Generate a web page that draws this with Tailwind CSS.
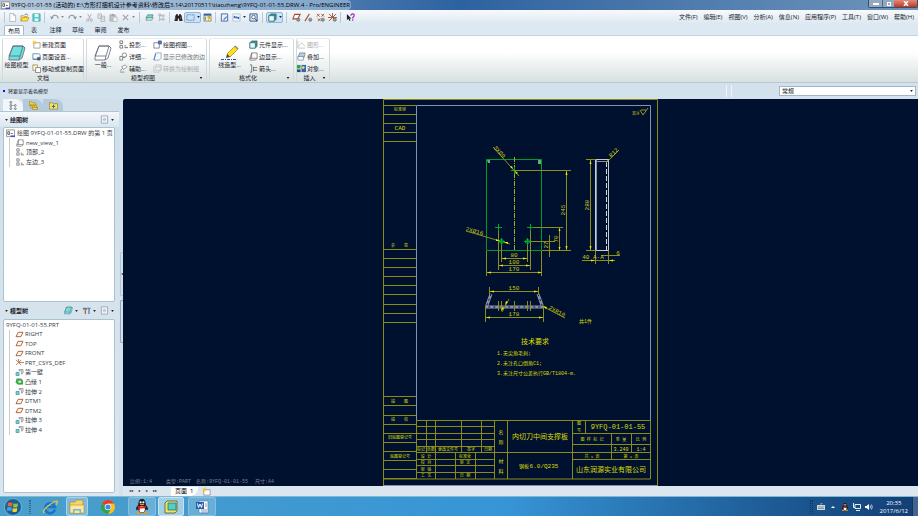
<!DOCTYPE html>
<html lang="zh-CN">

<head>
    <meta charset="UTF-8">
    <meta name="viewport" content="width=device-width, initial-scale=1.0">
    <title>9YFQ-01-01-55 - Pro/ENGINEER</title>
    <script src="https://cdn.jsdelivr.net/npm/@tailwindcss/browser@4"></script>
</head>

<body class="flex h-screen flex-col overflow-hidden bg-[#d3e1ec] font-['Open_Sans','Noto_Sans_CJK_SC',sans-serif] text-[6px] leading-[8px] text-[#16202a]">

    <!-- shared icons -->
    <svg class="hidden">
        <symbol id="caret" viewBox="0 0 4 3"><path d="M0 0h4L2 3z" fill="#222" /></symbol>
        <symbol id="sheet" viewBox="0 0 10 10"><path d="M2 .5h4l2.500 2.500v6.500h-6.500z" fill="#fff" stroke="#a0a6ac" stroke-width=".8" /><path d="M6 .5v2.500h2.500" fill="none" stroke="#a0a6ac" stroke-width=".7" /></symbol>
        <symbol id="open" viewBox="0 0 10 10"><path d="M1 9V3h3l1 1h3v2" fill="#f8e27a" stroke="#a98a20" stroke-width=".7" /><path d="M1 9l2-4h7L8 9z" fill="#ffe23c" stroke="#a98a20" stroke-width=".7" /><path d="M5 2q2-2 4 .5" fill="none" stroke="#444" stroke-width=".7" /></symbol>
        <symbol id="save" viewBox="0 0 10 10"><rect x="1" y="1" width="8" height="8" fill="#58cfd0" stroke="#259a9c" stroke-width=".7" /><path d="M3 1h4v3.500H3zM3 6h4v3H3z" fill="#eefafa" /></symbol>
        <symbol id="undo" viewBox="0 0 10 10"><path d="M2 6q1-4 4-3.500t3 3.500" fill="none" stroke="#8b97a1" stroke-width="1.200" /><path d="M0 4l4 .5-2 3z" fill="#8b97a1" /></symbol>
        <symbol id="redo" viewBox="0 0 10 10"><path d="M8 6Q7 2 4 2.500T1 6" fill="none" stroke="#8b97a1" stroke-width="1.200" /><path d="M10 4l-4 .5 2 3z" fill="#8b97a1" /></symbol>
        <symbol id="cut" viewBox="0 0 10 10"><path d="M3 1l3 6M7 1L4 7" stroke="#a6adb3" fill="none" /><circle cx="3" cy="8" r="1.300" fill="none" stroke="#a6adb3" /><circle cx="7" cy="8" r="1.300" fill="none" stroke="#a6adb3" /></symbol>
        <symbol id="copy" viewBox="0 0 10 10"><path d="M1 1h4v5H1zM4.500 3.500h4v6h-4z" fill="#e8eaec" stroke="#a6adb3" stroke-width=".8" /><path d="M5.500 5.500h2M5.500 7.500h2M2 3h2" stroke="#a6adb3" stroke-width=".6" /></symbol>
        <symbol id="movepage" viewBox="0 0 10 10"><path d="M1 1h5v6H1z" fill="#fff" stroke="#8a7c50" stroke-width=".8" /><path d="M4 4h5.500v5.500H4z" fill="#fff" stroke="#666" stroke-width=".8" /><path d="M1 1h2.500v1.500H1z" fill="#f2c020" /></symbol>
        <symbol id="paste" viewBox="0 0 10 10"><path d="M1 2h6v7H1z" fill="#bfc4c8" stroke="#a0a6ac" stroke-width=".8" /><path d="M3 1h2v2H3z" fill="#999" /><path d="M4.500 4.500h4.500v5H4.500z" fill="#f2f3f4" stroke="#a6adb3" stroke-width=".7" /></symbol>
        <symbol id="del" viewBox="0 0 10 10"><path d="M2 2l6 6M8 2L2 8" stroke="#9aa2a9" stroke-width="1.200" /></symbol>
        <symbol id="layers" viewBox="0 0 10 10"><path d="M1 8l2-3h6L7.500 8z" fill="#e8f4f4" stroke="#55757a" stroke-width=".7" /><path d="M1 5.500L3 2h6L7.500 5.500z" fill="#7ad4cc" stroke="#3d7a78" stroke-width=".7" /></symbol>
        <symbol id="mtree" viewBox="0 0 10 10"><path d="M3 1v8M3 3h3M3 7h3" fill="none" stroke="#9aa2a9" stroke-width=".8" /><path d="M6 2h2v2H6zM6 6h2v2H6zM2 1h2v2H2z" fill="#dde1e4" stroke="#9aa2a9" stroke-width=".6" /></symbol>
        <symbol id="find" viewBox="0 0 10 10"><path d="M1.500 3l1.500-2h1l.5 2h1L6 1h1l1.500 2L9.500 9H6L5.500 6h-1L4 9H.5z" fill="#26221e" /><path d="M2 4.500v3M7.500 4v3" stroke="#b89060" stroke-width=".6" /></symbol>
        <symbol id="pick" viewBox="0 0 10 10"><rect x="1" y="2" width="8" height="6" fill="none" stroke="#2c5d9a" stroke-dasharray="1 1" /></symbol>
        <symbol id="query" viewBox="0 0 10 10"><path d="M1 1h8v8H1z" fill="#f4f0c0" stroke="#6b7680" stroke-width=".8" /><path d="M1 1h8v2H1z" fill="#3465a8" /><path d="M2.500 4v4" stroke="#3465a8" /><path d="M5 5q1.500-2 2.500 0 0 1-1.200 1.500v.6M6.300 8v.8" fill="none" stroke="#c8a000" stroke-width="1.200" /></symbol>
        <symbol id="repaint" viewBox="0 0 10 10"><path d="M1.500 1h7v8h-7z" fill="#eaf2fb" stroke="#2d5496" stroke-width=".9" /><path d="M3.500 7L7 3.500l1 1L4.500 8z" fill="#4a87d0" /></symbol>
        <symbol id="refit" viewBox="0 0 10 10"><path d="M1 1h8v8H1z" fill="#f2f7fc" stroke="#90a7c4" stroke-width=".6" /><path d="M2 6V3l2 1.500zM8 4v3L6 5.500z" fill="#1746a8" /><path d="M3 4.500h3M4 5.500h3" stroke="#1746a8" /></symbol>
        <symbol id="zoomin" viewBox="0 0 10 10"><path d="M1 1h8v8H1z" fill="#d9e8f7" stroke="#2d5496" /><circle cx="5" cy="4.500" r="2" fill="#fff" stroke="#444" stroke-width=".8" /><path d="M6.500 6L9 9" stroke="#333" /></symbol>
        <symbol id="cube" viewBox="0 0 10 10"><path d="M1 3l2-2h6v6L7 9H1z" fill="#3c8f94" stroke="#256569" stroke-width=".7" /><path d="M1 3h6v6H1z" fill="#e9fbfb" stroke="#256569" stroke-width=".7" /></symbol>
        <symbol id="plane" viewBox="0 0 10 8"><path d="M3.500 1.500H9L6.500 6.500H1z" fill="#fff8f0" stroke="#a0522d" stroke-width="1" /></symbol>
        <symbol id="dplane" viewBox="0 0 10 10"><path d="M3 1.500h6L6.500 6.500H1z" fill="#fff" stroke="#a0522d" stroke-width="1.200" /><circle cx="7" cy="7.500" r="1.800" fill="#999" stroke="#555" stroke-width=".6" /></symbol>
        <symbol id="daxis" viewBox="0 0 10 10"><path d="M1 9L6 1" stroke="#a0522d" stroke-width="1.200" /><circle cx="7" cy="7.500" r="1.800" fill="#999" stroke="#555" stroke-width=".6" /></symbol>
        <symbol id="dpoint" viewBox="0 0 10 10"><path d="M1 1l3 3M4 1L1 4M6 1l3 3M9 1L6 4M2 6l3 3M5 6L2 9" stroke="#a0522d" /><circle cx="7.500" cy="7.500" r="1.800" fill="#999" stroke="#555" stroke-width=".6" /></symbol>
        <symbol id="dcsys" viewBox="0 0 10 10"><path d="M5 5V0M0 5h10M5 5L1 9M1 1l7 7M9 1L5 5" stroke="#a0522d" /><circle cx="7.500" cy="7.500" r="1.800" fill="#999" stroke="#555" stroke-width=".6" /></symbol>
        <symbol id="csys" viewBox="0 0 10 8"><path d="M4 4V0M4 4h6M4 4L1 7M4 4L1 1M4 4l3 3M4 4l3-3" stroke="#a0623d" stroke-width=".9" /></symbol>
        <symbol id="whats" viewBox="0 0 10 10"><path d="M1 1v7l1.500-1.500L4 9l1-.6L4 6h2z" fill="#222" /><path d="M5.500 3q0-2 2-2t1.500 2q0 1-1.500 2v1M7.500 7v1.500" fill="none" stroke="#a020c0" stroke-width="1.300" /></symbol>
        <symbol id="newpage" viewBox="0 0 10 10"><path d="M2 3h7v6H2z" fill="#fff" stroke="#777" stroke-width=".7" /><path d="M1 1.500h3.500v3H1z" fill="#f2c020" /><path d="M2.500 0v5M0 2.500h5" stroke="#f7d850" stroke-width=".6" /></symbol>
        <symbol id="pageset" viewBox="0 0 10 10"><path d="M1 2h7l1 1v5H1z" fill="#fff" stroke="#456fa4" stroke-width=".8" /><path d="M1 8h8M6 6h3v3H6z" fill="#3a66b4" stroke="#345" stroke-width=".6" /></symbol>
        <symbol id="views" viewBox="0 0 10 10"><path d="M1 1h3v3H1zM1 6h3v3H1z" fill="#fff" stroke="#555" stroke-width=".8" /><path d="M6 8.500h4M6 6.500h2" stroke="#555" stroke-width=".9" /></symbol>
        <symbol id="detail" viewBox="0 0 10 10"><circle cx="6" cy="3.500" r="2.500" fill="#fff" stroke="#666" stroke-width=".8" /><path d="M1 5h3v4H1zM4 7l3-2" fill="#fff" stroke="#666" stroke-width=".8" /></symbol>
        <symbol id="aux" viewBox="0 0 10 10"><path d="M3 3l4-2 2 2-4 3zM1 8l3-3M1 9h5" fill="#fff" stroke="#777" stroke-width=".8" /></symbol>
        <symbol id="dview" viewBox="0 0 10 10"><path d="M1 3h6v6H1z" fill="#fff" stroke="#667" stroke-width=".8" /><path d="M6 1h3.500v3.500H6z" fill="#4a78c8" stroke="#2c4f94" stroke-width=".6" /></symbol>
        <symbol id="modedge" viewBox="0 0 10 10"><path d="M3 1h6v6L7 9H1z" fill="#f4f8ff" stroke="#8894a4" stroke-width=".8" /><path d="M1 9L3 2" stroke="#4878d0" /></symbol>
        <symbol id="gray" viewBox="0 0 10 10"><path d="M1 3l2-2h6v6L7 9H1zM3 3h5v4H3z" fill="#f1f2f2" stroke="#b4babd" stroke-width=".8" /></symbol>
        <symbol id="wire" viewBox="0 0 10 10"><path d="M3 1h6v6L7 9H1V7zM3 1v6H1M3 7h6" fill="#fff" stroke="#666" stroke-width=".8" /></symbol>
        <symbol id="arrows" viewBox="0 0 10 10"><path d="M1 1h2v8H1M5 4h4M5 7h4M5 3v5" fill="none" stroke="#555" stroke-width=".8" /></symbol>
        <symbol id="graph" viewBox="0 0 10 10"><path d="M1 1v8h8M1 8l4-5 4 4" fill="none" stroke="#b4babd" stroke-width=".8" /></symbol>
        <symbol id="overlay" viewBox="0 0 10 10"><path d="M3 1h6L8 6H1z" fill="#a8d0ea" stroke="#66737e" stroke-width=".7" /><path d="M1 5h6v4H1z" fill="#fff" stroke="#66737e" stroke-width=".7" /></symbol>
        <symbol id="object" viewBox="0 0 10 10"><path d="M0 1h4v4H0z" fill="#38a048" /><path d="M5 1h5v8H5z" fill="#2e68b8" /><path d="M0 6h4v3H0z" fill="#28486c" /><circle cx="7" cy="4" r="1.500" fill="#ffd75c" /></symbol>
        <symbol id="block" viewBox="0 0 18 16"><path d="M5 1h10l2 2-3 10-3 2H1V12z" fill="currentColor" stroke="#667" stroke-width=".8" /><path d="M5 1h10l-3 10H1zM12 11l-1 4M15 1l2 2" fill="none" stroke="#667" stroke-width=".8" /></symbol>
        <symbol id="pencil" viewBox="0 0 18 16"><path d="M6 9L14 1l3 3-8 8z" fill="#ffdf20" stroke="#a07c10" stroke-width=".7" /><path d="M6 9l3 3-4 1z" fill="#5b4636" /><path d="M14 1l3 3" stroke="#888" stroke-width="1.500" /><path d="M0 14.500h16" stroke="#1c4fd0" stroke-width="1.200" stroke-dasharray="3 1 1 1" /></symbol>
        <symbol id="list" viewBox="0 0 10 10"><path d="M1.500 1h7v8h-7z" fill="#fff" stroke="#7d90a8" stroke-width=".8" /><path d="M3 3.500h4M3 5h4M3 6.500h4" stroke="#8aa0b8" stroke-width=".7" /></symbol>
        <symbol id="tree" viewBox="0 0 10 10"><path d="M2 2v6M2 5h4" stroke="#777" stroke-width=".6" /><circle cx="2" cy="1.500" r="1" fill="#fff" stroke="#444" stroke-width=".7" /><circle cx="2" cy="5" r="1" fill="#fff" stroke="#444" stroke-width=".7" /><circle cx="2" cy="8.500" r="1" fill="#fff" stroke="#444" stroke-width=".7" /><circle cx="7" cy="5" r="1" fill="#fff" stroke="#444" stroke-width=".7" /><circle cx="7" cy="8.500" r="1" fill="#fff" stroke="#444" stroke-width=".7" /></symbol>
        <symbol id="folders" viewBox="0 0 10 10"><path d="M.5 1h3l1 1H7v3H.5zM2 3.500h3l1 1h2.500v3H2zM4 6h2l1 1h2.500v2.500H4z" fill="#ffdf4a" stroke="#8a7420" stroke-width=".6" /></symbol>
        <symbol id="fav" viewBox="0 0 10 10"><path d="M.5 2h3l1 1h5v6h-9z" fill="#ffe45c" stroke="#8a7420" stroke-width=".7" /><path d="M5 4v4M3 6h4" stroke="#3058a8" /></symbol>
        <symbol id="tools" viewBox="0 0 10 10"><path d="M1 2h5v2H1z" fill="#6a7480" /><path d="M3 4h1.500v5H3z" fill="#b06a30" /><path d="M7 4l-1-2 1-1 .5 1.500L9 2l.5-1V3L8.500 4v5H7z" fill="#5688b8" /></symbol>
        <symbol id="drw" viewBox="0 0 10 10"><path d="M.5 1h9v7.500h-9z" fill="#fff" stroke="#777" stroke-width=".8" /><path d="M2 3h2v3H2zM5.500 5h2" fill="none" stroke="#333" stroke-width=".8" /><path d="M5 8h5" stroke="#2436d0" stroke-width="1.300" /></symbol>
        <symbol id="extrude" viewBox="0 0 10 8"><path d="M4.500.5H9v4L7.500 6V2h-3z" fill="#fff" stroke="#667" stroke-width=".7" /><path d="M1 4h3.500v3.500H1z" fill="#6cd8e0" stroke="#347c88" stroke-width=".7" /></symbol>
        <symbol id="protr" viewBox="0 0 10 8"><path d="M2 1h5l1.500 2v4H3L1 5z" fill="#3eb84c" stroke="#23702c" stroke-width=".7" /><path d="M4 3h2.500v2.500H4z" fill="#e7f8e8" /></symbol>
        <symbol id="qq" viewBox="0 0 14 16"><ellipse cx="4" cy="14.500" rx="3" ry="1.300" fill="#f39a12" /><ellipse cx="10" cy="14.500" rx="3" ry="1.300" fill="#f39a12" /><path d="M3 6q0-6 4-6t4 6q3 3 2 6l-2-1q-1 4-4 4t-4-4l-2 1Q0 9 3 6z" fill="#16181c" /><ellipse cx="7" cy="11" rx="3" ry="3.500" fill="#fff" /><path d="M2.500 7q4.500 2 9 0v2q-4.500 2-9 0z" fill="#e0201c" /><path d="M3 9h2v3H3z" fill="#e0201c" /><circle cx="5.500" cy="3.500" r="1.200" fill="#fff" /><circle cx="8.500" cy="3.500" r="1.200" fill="#fff" /><ellipse cx="7" cy="5.800" rx="2.500" ry=".8" fill="#f39a12" /></symbol>
    </svg>

    <!-- title bar -->
    <header class="flex h-[10px] shrink-0 items-start justify-between bg-linear-to-r from-[#9db9d4] via-[#2d62a0] to-[#6f94ba]">
        <div class="flex h-[10px] items-center gap-px rounded-r bg-linear-to-r from-[#b3c7db] to-[#7fa5cc] px-px text-black">
            <svg class="size-[9px]"><use href="#drw" /></svg>
            <h1 class="whitespace-nowrap">9YFQ-01-01-55 (活动的) E:\方形打捆机设计参考资料\修改后3.14\20170511\tiaozheng\9YFQ-01-01-55.DRW.4 - Pro/ENGINEER</h1>
        </div>
        <div class="flex h-2 overflow-hidden rounded-b-xs border border-t-0 border-[#33526f]">
            <button aria-label="最小化" class="flex w-[13px] items-center justify-center bg-[#93a9c0]"><span class="h-[2px] w-1.5 bg-white"></span></button>
            <button aria-label="还原" class="flex w-3 items-center justify-center border-l border-[#4d6985] bg-[#93a9c0]"><span class="size-1 border border-white"></span></button>
            <button aria-label="关闭" class="flex w-[23px] items-center justify-center bg-linear-to-b from-[#e08a78] to-[#c4321c]"><svg class="h-[5px] w-1.5" viewBox="0 0 6 5"><path d="M1 0l4 5M5 0L1 5" stroke="#fff" stroke-width="1.500" /></svg></button>
        </div>
    </header>

    <!-- quick access bar and menus -->
    <div class="flex h-[13px] shrink-0 items-center justify-between bg-linear-to-b from-[#f7fafd] to-[#e0e9f1] pt-px">
        <div class="flex items-center">
            <span class="mr-[1px] ml-[4px] h-[11px] w-px bg-[#b9c9d7]"></span>
            <button aria-label="新建" class="w-3"><svg class="mx-auto size-[9px]"><use href="#sheet" /></svg></button>
            <button aria-label="打开" class="w-3"><svg class="mx-auto size-[9px]"><use href="#open" /></svg></button>
            <button aria-label="保存" class="w-3"><svg class="mx-auto size-[9px]"><use href="#save" /></svg></button>
            <span class="mr-[3px] ml-[2px] h-[11px] w-px bg-[#b9c9d7]"></span>
            <button aria-label="撤消" class="flex w-[18px] items-center justify-center gap-[2px]"><svg class="size-[9px]"><use href="#undo" /></svg><svg class="h-[2px] w-[3px] opacity-50"><use href="#caret" /></svg></button>
            <button aria-label="重做" class="flex w-[18px] items-center justify-center gap-[2px]"><svg class="size-[9px]"><use href="#redo" /></svg><svg class="h-[2px] w-[3px] opacity-50"><use href="#caret" /></svg></button>
            <button aria-label="剪切" class="w-[11px]"><svg class="mx-auto size-[9px]"><use href="#cut" /></svg></button>
            <button aria-label="复制" class="w-3"><svg class="mx-auto size-[9px]"><use href="#copy" /></svg></button>
            <button aria-label="粘贴" class="w-3"><svg class="mx-auto size-[9px]"><use href="#paste" /></svg></button>
            <button aria-label="删除" class="flex w-[17px] items-center justify-center gap-[2px]"><svg class="size-[9px]"><use href="#del" /></svg><svg class="h-[2px] w-[3px] opacity-50"><use href="#caret" /></svg></button>
            <span class="mx-[3px] h-[11px] w-px bg-[#b9c9d7]"></span>
            <button aria-label="再生" class="w-3"><svg class="mx-auto size-[9px]"><use href="#layers" /></svg></button>
            <button aria-label="模型树" class="w-3"><svg class="mx-auto size-[9px]"><use href="#mtree" /></svg></button>
            <span class="mx-[2px] h-[11px] w-px bg-[#b9c9d7]"></span>
            <button aria-label="查找" class="w-3"><svg class="mx-auto size-[9px]"><use href="#find" /></svg></button>
            <button aria-label="选取" class="flex h-[11px] w-[17px] items-center justify-center gap-[2px] rounded-xs border border-[#8db8dc] bg-[#cbe3f6]"><svg class="size-[9px]"><use href="#pick" /></svg><svg class="h-[2px] w-[3px]"><use href="#caret" /></svg></button>
            <button aria-label="查询" class="w-3"><svg class="mx-auto size-[9px]"><use href="#query" /></svg></button>
            <span class="mx-[2px] h-[11px] w-px bg-[#b9c9d7]"></span>
            <button aria-label="重画" class="w-3"><svg class="mx-auto size-[9px]"><use href="#repaint" /></svg></button>
            <button aria-label="重新调整" class="flex w-[17px] items-center justify-center gap-[2px]"><svg class="size-[9px]"><use href="#refit" /></svg><svg class="h-[2px] w-[3px]"><use href="#caret" /></svg></button>
            <button aria-label="缩放" class="w-3"><svg class="mx-auto size-[9px]"><use href="#zoomin" /></svg></button>
            <span class="mx-[3px] h-[11px] w-px bg-[#b9c9d7]"></span>
            <button aria-label="显示样式" class="flex h-[11px] w-[17px] items-center justify-center gap-[2px] rounded-xs border border-[#8db8dc] bg-[#cbe3f6]"><svg class="size-[9px]"><use href="#cube" /></svg><svg class="h-[2px] w-[3px]"><use href="#caret" /></svg></button>
            <span class="mx-[3px] h-[11px] w-px bg-[#b9c9d7]"></span>
            <button aria-label="基准平面" class="w-3"><svg class="mx-auto size-[9px]"><use href="#dplane" /></svg></button>
            <button aria-label="基准轴" class="w-3"><svg class="mx-auto size-[9px]"><use href="#daxis" /></svg></button>
            <button aria-label="基准点" class="w-3"><svg class="mx-auto size-[9px]"><use href="#dpoint" /></svg></button>
            <button aria-label="坐标系" class="w-3"><svg class="mx-auto size-[9px]"><use href="#dcsys" /></svg></button>
            <span class="mr-[3px] ml-[2px] h-[11px] w-px bg-[#b9c9d7]"></span>
            <button aria-label="上下文帮助" class="w-3"><svg class="mx-auto size-[9px]"><use href="#whats" /></svg></button>
        </div>
        <nav class="flex gap-[6px] pr-[4px]">
            <button>文件(F)</button>
            <button>编辑(E)</button>
            <button>视图(V)</button>
            <button>分析(A)</button>
            <button>信息(N)</button>
            <button>应用程序(P)</button>
            <button>工具(T)</button>
            <button>窗口(W)</button>
            <button>帮助(H)</button>
        </nav>
    </div>

    <!-- ribbon tabs -->
    <div class="flex h-[13px] shrink-0 items-end border-b border-[#c3d2df] bg-[#dce8f2] pl-[4px]">
        <button class="h-[10px] w-5 rounded-t-xs border border-b-0 border-[#a5b9ca] bg-white">布局</button>
        <button class="h-[10px] w-5">表</button>
        <button class="h-[10px] w-[23px]">注释</button>
        <button class="h-[10px] w-[22px]">草绘</button>
        <button class="h-[10px] w-[23px]">审阅</button>
        <button class="h-[10px] w-[23px]">发布</button>
    </div>

    <!-- ribbon -->
    <div class="flex h-[47px] shrink-0 gap-[2px] border-b border-[#b7c7d3] bg-linear-to-b from-white from-35% to-[#d8e0e0] pt-[2px] pl-[2px] whitespace-nowrap">
        <section class="flex w-[82px] flex-col rounded-xs border border-b-0 border-t-[#e8eef0] border-[#d0dade]">
            <div class="flex flex-1 items-center">
                <button class="w-[27px] shrink-0"><svg class="mx-auto h-4 w-[18px] text-[#6fe0e0]"><use href="#block" /></svg>绘图模型</button>
                <div class="flex flex-1 flex-col gap-[3px] pl-[2px]">
                    <button class="flex h-[9px] items-center gap-[1px]"><svg class="size-[9px]"><use href="#newpage" /></svg>新建页面</button>
                    <button class="flex h-[9px] items-center gap-[1px]"><svg class="size-[9px]"><use href="#pageset" /></svg>页面设置...</button>
                    <button class="flex h-[9px] items-center gap-[1px]"><svg class="size-[9px]"><use href="#movepage" /></svg>移动或复制页面</button>
                </div>
            </div>
            <h2 class="text-center">文档</h2>
        </section>
        <section class="flex w-[121px] flex-col rounded-xs border border-b-0 border-t-[#e8eef0] border-[#d0dade]">
            <div class="flex flex-1 items-center">
                <button class="w-[32px] shrink-0"><svg class="mx-auto h-4 w-[18px] text-white"><use href="#block" /></svg>一般...</button>
                <div class="flex w-[34px] flex-col gap-[3px]">
                    <button class="flex h-[9px] items-center gap-[1px]"><svg class="size-[9px]"><use href="#views" /></svg>投影...</button>
                    <button class="flex h-[9px] items-center gap-[1px]"><svg class="size-[9px]"><use href="#detail" /></svg>详细...</button>
                    <button class="flex h-[9px] items-center gap-[1px]"><svg class="size-[9px]"><use href="#aux" /></svg>辅助...</button>
                </div>
                <div class="flex flex-1 flex-col gap-[3px]">
                    <button class="flex h-[9px] items-center gap-[1px]"><svg class="size-[9px]"><use href="#dview" /></svg>绘图视图...</button>
                    <button class="flex h-[9px] items-center gap-[1px] text-[#6c757c]"><svg class="size-[9px]"><use href="#modedge" /></svg>显示已修改的边</button>
                    <button class="flex h-[9px] items-center gap-[1px] text-[#a8aeb2]"><svg class="size-[9px]"><use href="#gray" /></svg>转换为绘制组</button>
                </div>
            </div>
            <div class="flex items-center pr-[3px]"><h2 class="flex-1 text-center">模型视图</h2><svg class="h-[2px] w-[4px]"><use href="#caret" /></svg></div>
        </section>
        <section class="flex w-[85px] flex-col rounded-xs border border-b-0 border-t-[#e8eef0] border-[#d0dade]">
            <div class="flex flex-1 items-center">
                <button class="w-[39px] shrink-0"><svg class="mx-auto h-4 w-[18px]"><use href="#pencil" /></svg>线造型...</button>
                <div class="flex flex-1 flex-col gap-[3px]">
                    <button class="flex h-[9px] items-center gap-[1px]"><svg class="size-[9px]"><use href="#cube" /></svg>元件显示...</button>
                    <button class="flex h-[9px] items-center gap-[1px]"><svg class="size-[9px]"><use href="#wire" /></svg>边显示...</button>
                    <button class="flex h-[9px] items-center gap-[1px]"><svg class="size-[9px]"><use href="#arrows" /></svg>箭头...</button>
                </div>
            </div>
            <div class="flex items-center pr-[3px]"><h2 class="flex-1 text-center">格式化</h2><svg class="h-[2px] w-[4px]"><use href="#caret" /></svg></div>
        </section>
        <section class="flex w-[34px] flex-col rounded-xs border border-b-0 border-t-[#e8eef0] border-[#d0dade]">
            <div class="flex flex-1 flex-col justify-center gap-[3px]">
                <button class="flex h-[9px] items-center gap-[1px] text-[#a8aeb2]"><svg class="size-[9px]"><use href="#graph" /></svg>图形...</button>
                <button class="flex h-[9px] items-center gap-[1px]"><svg class="size-[9px]"><use href="#overlay" /></svg>叠加...</button>
                <button class="flex h-[9px] items-center gap-[1px]"><svg class="size-[9px]"><use href="#object" /></svg>对象...</button>
            </div>
            <div class="flex items-center pr-[3px]"><h2 class="flex-1 text-center">插入</h2><svg class="h-[2px] w-[4px]"><use href="#caret" /></svg></div>
        </section>
    </div>

    <!-- message line and selection filter -->
    <div class="flex h-[15px] shrink-0 items-center justify-between pr-[2px] pl-[3px]">
        <p class="flex items-center gap-[3px] text-[5px]"><span class="size-[2px] bg-[#0a14f0]"></span>将要显示着色模型</p>
        <div class="flex items-center gap-[4px]">
            <span class="h-3 w-px bg-[#eef4f8]"></span>
            <span class="mr-[43px] h-3 w-px bg-[#eef4f8]"></span>
            <div class="relative">
                <select aria-label="选取过滤器" class="block h-[10px] w-[137px] appearance-none border border-[#a3b6c6] bg-white pl-[2px] leading-[8px]">
                    <option>常规</option>
                </select>
                <svg class="pointer-events-none absolute top-[4px] right-[3px] h-[2px] w-[3px]"><use href="#caret" /></svg>
            </div>
        </div>
    </div>

    <main class="flex min-h-0 flex-1">
        <aside class="flex w-[119px] shrink-0 flex-col bg-linear-to-b from-[#d0dfea] to-[#dbe7ef] pb-[3px]">
            <div class="flex h-[14px] items-end border-b border-[#b0c4d3] pl-[3px]">
                <button aria-label="模型树" class="flex h-3 w-5 items-center justify-center rounded-tr-lg bg-[#f0f6fa]"><svg class="size-[9px]"><use href="#tree" /></svg></button>
                <button aria-label="文件夹浏览器" class="flex h-3 w-5 items-center justify-center rounded-tr-lg bg-[#b4cad9]"><svg class="size-[9px]"><use href="#folders" /></svg></button>
                <button aria-label="收藏夹" class="flex h-3 w-5 items-center justify-center rounded-tr-lg bg-[#b4cad9]"><svg class="size-[9px]"><use href="#fav" /></svg></button>
            </div>
            <div class="flex h-[15px] items-center bg-linear-to-b from-[#f3f8fb] to-[#dae6ee] pr-[5px] pl-[5px]">
                <h2 class="flex flex-1 items-center gap-[2px] font-bold"><svg class="h-[2px] w-[3px]"><use href="#caret" /></svg>绘图树</h2>
                <button aria-label="设置" class="flex items-center gap-[2px]"><svg class="size-[9px]"><use href="#list" /></svg><svg class="h-[2px] w-[3px]"><use href="#caret" /></svg></button>
            </div>
            <div class="mr-1 ml-[3px] flex-1 overflow-hidden rounded-xs border border-[#a9c2d3] bg-white whitespace-nowrap text-[#343c44]">
                <div class="flex h-[10px] items-center gap-[2px] pl-[2px]"><svg class="size-[9px] shrink-0"><use href="#drw" /></svg>绘图 9YFQ-01-01-55.DRW 的第 1 页</div>
                <ul class="ml-[5px] grid h-[29px] grid-rows-3 border-l border-[#ccc] pl-[5px]">
                    <li class="flex items-center gap-[1px]"><svg class="h-2 w-[10px]"><use href="#wire" /></svg>new_view_1</li>
                    <li class="flex items-center gap-[1px]"><svg class="h-2 w-[10px]"><use href="#views" /></svg>顶部_2</li>
                    <li class="flex items-center gap-[1px]"><svg class="h-2 w-[10px]"><use href="#views" /></svg>左边_3</li>
                </ul>
            </div>
            <div class="flex h-[17px] items-center gap-[4px] pt-px pr-[5px] pl-[5px]">
                <h2 class="flex flex-1 items-center gap-[2px] font-bold"><svg class="h-[2px] w-[3px]"><use href="#caret" /></svg>模型树</h2>
                <button aria-label="显示" class="flex items-center gap-[2px] text-[#6fe0e0]"><svg class="size-[9px]"><use href="#block" /></svg><svg class="h-[2px] w-[3px]"><use href="#caret" /></svg></button>
                <button aria-label="工具" class="flex items-center gap-[2px]"><svg class="size-[9px]"><use href="#tools" /></svg><svg class="h-[2px] w-[3px]"><use href="#caret" /></svg></button>
                <button aria-label="列表" class="flex items-center gap-[2px]"><svg class="size-[9px]"><use href="#list" /></svg><svg class="h-[2px] w-[3px]"><use href="#caret" /></svg></button>
            </div>
            <div class="mr-1 ml-[3px] flex-1 overflow-hidden rounded-xs border border-[#a9c2d3] bg-white whitespace-nowrap text-[#343c44]">
                <div class="h-[10px] pl-[2px] leading-[10px]">9YFQ-01-01-55.PRT</div>
                <ul class="ml-[5px] grid h-[105px] grid-rows-11 border-l border-[#ccc] pl-[5px]">
                    <li class="flex items-center gap-[1px]"><svg class="h-[7px] w-[9px]"><use href="#plane" /></svg>RIGHT</li>
                    <li class="flex items-center gap-[1px]"><svg class="h-[7px] w-[9px]"><use href="#plane" /></svg>TOP</li>
                    <li class="flex items-center gap-[1px]"><svg class="h-[7px] w-[9px]"><use href="#plane" /></svg>FRONT</li>
                    <li class="flex items-center gap-[1px]"><svg class="h-[7px] w-[9px]"><use href="#csys" /></svg>PRT_CSYS_DEF</li>
                    <li class="flex items-center gap-[1px]"><svg class="h-[7px] w-[9px]"><use href="#extrude" /></svg>第一壁</li>
                    <li class="flex items-center gap-[1px]"><svg class="h-[7px] w-[9px]"><use href="#protr" /></svg>凸缘 1</li>
                    <li class="flex items-center gap-[1px]"><svg class="h-[7px] w-[9px]"><use href="#extrude" /></svg>拉伸 2</li>
                    <li class="flex items-center gap-[1px]"><svg class="h-[7px] w-[9px]"><use href="#plane" /></svg>DTM1</li>
                    <li class="flex items-center gap-[1px]"><svg class="h-[7px] w-[9px]"><use href="#plane" /></svg>DTM2</li>
                    <li class="flex items-center gap-[1px]"><svg class="h-[7px] w-[9px]"><use href="#extrude" /></svg>拉伸 3</li>
                    <li class="flex items-center gap-[1px]"><svg class="h-[7px] w-[9px]"><use href="#extrude" /></svg>拉伸 4</li>
                </ul>
            </div>
        </aside>
        <div class="flex w-[4px] shrink-0 flex-col items-center pt-[154px]">
            <button aria-label="折叠导航器" class="h-[44px] w-[3px] rounded-l-xs border border-r-0 border-[#b3c6d4] text-[4px] leading-[40px]">◂</button>
            <span class="mt-[4px] h-[43px] w-[3px] rounded-l-xs border border-r-0 border-[#93a9b9]"></span>
        </div>

        <section class="flex min-w-0 flex-1 flex-col pt-px">
            <!-- drawing sheet -->
            <div class="min-h-0 flex-1 overflow-hidden rounded-tl-xs bg-[#00102f]">
                <svg class="size-full font-['Liberation_Mono','Noto_Sans_CJK_SC',monospace] text-[6px]" viewBox="123 99 795 387" preserveAspectRatio="xMinYMin meet" fill="none">
                    <!-- frame -->
                    <path d="M383.500 486V99.500h274V486M650.500 420v59H384" stroke="#8c8c14" />
                    <path d="M416.500 420V105.500h234V420" stroke="#8b90a8" />
                    <path d="M383 485.500h275" stroke="#8b90a8" />
                    <path d="M384 105.500h32M384 114.500h32M384 123.500h32M384 132.500h32M384 141.500h32M384 249.500h32M384 258.500h32M384 267.500h32M384 276.500h32M384 285.500h32M384 294.500h32M384 304.500h32M384 313.500h32M384 322.500h32M384 396.500h32M384 405.500h32M384 415.500h32M384 424.500h32M384 433.500h32M384 442.500h32M384 451.500h32M384 460.500h32M384 469.500h32M384 478.500h32" stroke="#8c8c14" />
                    <!-- title block -->
                    <path d="M416.500 420v59M416 420.500h234M416 426.500h78M416 433.500h78M416 439.500h78M416 446.500h78M416 452.500h234M416 459.500h78M416 465.500h78M416 472.500h78M572 433.500h78M572 444.500h78M572 459.500h78M426.500 420v32M435.500 420v59M461.500 420v32M481.500 420v32M455.500 452v27M475.500 452v27M494.500 420v59M507.500 420v59M572.500 420v59M585.500 420v13M611.500 433v26M631.500 433v19" stroke="#8c8c14" />

                    <!-- front view -->
                    <path d="M486.500 250.500v-91h55v91z" stroke="#009a28" />
                    <path d="M487 160h3v3h-2zM538 160h3v4h-3z" fill="#5db070" />
                    <path d="M514.500 157v94" stroke="#a8a818" stroke-dasharray="5 1 1 1" />
                    <path d="M511 170.500h7M514.500 167v7" stroke="#00a82c" />
                    <g stroke="#8e8e18">
                        <path d="M514 170.500h57M542 250.500h29M566.500 171v79M531 227.500h32M559.500 228v22M528 241.500h27M549.500 235v22" />
                        <path d="M498.500 229v41M501.500 243v19M527.500 243v19M530.500 229v41M486.500 251v25M541.500 251v25" />
                        <path d="M502 258.500h25M499 265.500h31M487 272.500h55M493 147l26 29M466 231l44 13" />
                    </g>
                    <path d="M495 227.500h7M498.500 224v7M527 227.500h7M530.500 224v7M498 241.500h7M501.500 238v7M524 241.500h7M527.500 238v7" stroke="#00a82c" />
                    <circle cx="501.500" cy="241.500" r="2" stroke="#00a82c" /><circle cx="527.500" cy="241.500" r="2" stroke="#00a82c" />
                    <path d="M566.500 171l1 4h-2zM566.500 250l1-4h-2zM559.500 228l1 3h-2zM559.500 250l1-3h-2zM502 258.500l4-1v2zM527 258.500l-4-1v2zM499 265.500l4-1v2zM530 265.500l-4-1v2zM487 272.500l4-1v2zM542 272.500l-4-1v2zM513 169l-3-2 2-1zM515 171l3 2-2 1zM500 241l-4-2v2zM504 242l4 2v-2z" fill="#eaea00" />
                    <g fill="#c8c810" text-anchor="middle">
                        <text transform="translate(565 210) rotate(-90)">245</text>
                        <text transform="translate(558 239) rotate(-90)">70</text>
                        <text transform="translate(548 245) rotate(-90)">27</text>
                        <text x="514" y="257">80</text>
                        <text x="514" y="264">100</text>
                        <text x="514" y="271">170</text>
                        <text transform="translate(498 153) rotate(48)">3XØ9</text>
                        <text transform="translate(474 233) rotate(16)">2XØ16</text>
                    </g>

                    <!-- side view -->
                    <path d="M595.500 250.500v-91h13v91z" stroke="#c6cad8" />
                    <path d="M596.500 160v90M596 161.500h11" stroke="#8b90a8" />
                    <path d="M606.500 162v88" stroke="#d8d8e0" stroke-dasharray="5 2" />
                    <path d="M586 159.500h10M586 250.500h10M590.500 160v90M595.500 251v13M608.500 251v13M582 260.500h33M601 255.500h19M606 163l13-13" stroke="#8e8e18" />
                    <path d="M590.500 160l1 4h-2zM590.500 250l1-4h-2zM595 260.500l-4-1v2zM609 260.500l4-1v2zM607 162l1-3 1 1z" fill="#eaea00" />
                    <g fill="#c8c810" text-anchor="middle">
                        <text transform="translate(589 205) rotate(-90)">280</text>
                        <text transform="translate(615 154) rotate(-45)">R12</text>
                        <text x="593" y="259">40 A-A</text>
                        <text x="618" y="255">6</text>
                    </g>

                    <!-- bottom view -->
                    <path d="M491 294l-4 11v2h55v-2l-4-11" stroke="#8b90a8" stroke-width="3" />
                    <path d="M491 294l-4 11v2h55v-2l-4-11" stroke="#00102f" stroke-dasharray="2 3" />
                    <path d="M489.500 287v8M538.500 287v8M490 291.500h48M485.500 306v16M543.500 306v16M486 317.500h58M498.500 301v10M501.500 301v10M514.500 301v10M527.500 301v10M530.500 301v10M502 312l7-13M542 306l23 12" stroke="#8e8e18" />
                    <path d="M490 291.500l4-1v2zM538 291.500l-4-1v2zM486 317.500l4-1v2zM543 317.500l-4-1v2zM505 305l1-4 2 1zM504 307l-3 2 2 1zM543 306l4 1-1 2z" fill="#eaea00" />
                    <g fill="#c8c810" text-anchor="middle">
                        <text x="514" y="290">150</text>
                        <text x="514" y="316">178</text>
                        <text transform="translate(556 313) rotate(29)">2XR10</text>
                    </g>

                    <!-- notes -->
                    <g fill="#dcdc00">
                        <text x="579" y="323" class="text-[5px]">共1件</text>
                        <text x="632" y="115" class="text-[4px]">其余</text>
                        <path d="M640 110l3 5 5-7M641 110h5" stroke="#b8b810" stroke-width=".8" fill="none" />
                        <text x="535" y="344" text-anchor="middle" class="text-[7px]">技术要求</text>
                        <text x="497" y="355" class="text-[5px]">1.无尖角毛刺;</text>
                        <text x="497" y="365" class="text-[5px]">2.未注孔口倒角C1;</text>
                        <text x="497" y="375" class="text-[5px]">3.未注尺寸公差执行GB/T1804-m.</text>
                    </g>

                    <g fill="#dcdc00" text-anchor="middle" class="text-[4px]">
                        <text x="400" y="111">标准审</text>
                        <text x="400" y="130" class="text-[6px]">CAD</text>
                        <text x="393" y="247">会</text><text x="406" y="247">签</text>
                        <text x="393" y="403">描</text><text x="406" y="403">图</text>
                        <text x="393" y="421">描</text><text x="406" y="421">校</text>
                        <text x="400" y="439">旧底图登记号</text>
                        <text x="400" y="458">底图登记号</text>
                        <text x="421" y="451">标记</text><text x="431" y="451">处数</text><text x="448" y="451">更改文件号</text><text x="471" y="451">签字</text><text x="488" y="451">日期</text>
                        <text x="426" y="458">设 计</text><text x="465" y="458">标准化</text>
                        <text x="426" y="464">校 对</text><text x="465" y="464">审 定</text>
                        <text x="426" y="471">审 核</text>
                        <text x="426" y="477">工 艺</text><text x="465" y="477">日 期</text>
                        <text x="501" y="434" class="text-[5px]">名</text><text x="501" y="444" class="text-[5px]">称</text>
                        <text x="501" y="463" class="text-[5px]">材</text><text x="501" y="473" class="text-[5px]">料</text>
                        <text x="579" y="425">图</text><text x="579" y="432">号</text>
                        <text x="592" y="441">图 样 标 记</text><text x="621" y="441">重 量</text><text x="641" y="441">比 例</text>
                        <text x="592" y="458">共 1 页</text><text x="631" y="458">第 1 页</text>
                        <text x="540" y="439" class="text-[7px]">内切刀中间支撑板</text>
                        <text x="524" y="468" class="text-[5px]">钢板</text><text x="544" y="468" class="text-[6px]">6.0/Q235</text>
                        <text x="618" y="429" class="text-[7px]">9YFQ-01-01-55</text>
                        <text x="621" y="451" class="text-[5px]">3.249</text><text x="641" y="451" class="text-[5px]">1:4</text>
                        <text x="611" y="472" class="text-[7px]">山东润源实业有限公司</text>
                    </g>

                    <g fill="#7d818c" class="text-[5px]">
                        <text x="130" y="483">比例:1:4</text>
                        <text x="166" y="483">类型:PART</text>
                        <text x="196" y="483">名称:9YFQ-01-01-55</text>
                        <text x="255" y="483">尺寸:A4</text>
                    </g>
                </svg>
            </div>
            <div class="flex h-[10px] shrink-0 items-center bg-[#dbe6ef]">
                <div class="flex w-12 justify-evenly pr-[8px] text-[4px]">
                    <button aria-label="首页">◂◂</button>
                    <button aria-label="上一页">◂</button>
                    <button aria-label="下一页">▸</button>
                    <button aria-label="末页">▸▸</button>
                </div>
                <button class="h-[9px] rounded-br-lg bg-white px-[4px] text-black">页面&nbsp; 1</button>
                <button aria-label="新建页面" class="ml-[4px]"><svg class="size-[9px]"><use href="#newpage" /></svg></button>
            </div>
        </section>
    </main>

    <!-- taskbar -->
    <footer class="flex h-5 shrink-0 items-center justify-between border-t border-[#7fb9d8] bg-linear-to-r from-[#4a9fca] via-[#3795d6] via-55% to-[#123e74] text-white">
        <div class="flex h-full items-center">
            <button aria-label="开始" class="w-[26px]">
                <svg class="mx-auto size-[18px]" viewBox="0 0 18 18"><circle cx="9" cy="9" r="8.500" fill="#1c5e94" stroke="#7fc0e4" stroke-width=".8" /><path d="M4 5q2-1 4.500 0L8 8.500q-2-1-4.500 0z" fill="#f2642c" /><path d="M9.500 5.300q2 1 4.500 0L13.500 9q-2 1-4.500 0z" fill="#8cc63a" /><path d="M3.300 9.500q2-1 4.500 0L7.300 13q-2-1-4.500 0z" fill="#3ba4ea" /><path d="M8.800 10q2 1 4.500 0l-.5 3.500q-2 1-4.500 0z" fill="#fccf2e" /></svg>
            </button>
            <span class="mx-[3px] h-3.5 w-[2px] border-x border-dotted border-[#2c6c94]"></span>
            <button aria-label="Internet Explorer" class="mx-[3px] w-[26px]">
                <svg class="mx-auto size-4" viewBox="0 0 16 16"><path d="M13 10.500A5 5 0 1 1 13 8H4.500" fill="none" stroke="#1874cc" stroke-width="2.600" /><path d="M2 14q-2-2 4-7t9-5q1 1-1 4" fill="none" stroke="#f0c83c" stroke-width="1.200" /></svg>
            </button>
            <button aria-label="资源管理器" class="h-full w-[22px] rounded-xs border border-[#a4d4ea] bg-white/30">
                <svg class="mx-auto h-[15px] w-4" viewBox="0 0 16 15"><path d="M1 3h5l1-2h7v13H1z" fill="#f4d56c" stroke="#b08c2c" stroke-width=".7" /><path d="M1 6h14v8H1z" fill="#fbe89c" stroke="#c09c3c" stroke-width=".7" /><path d="M4 10h8v4H4z" fill="#6fb8e4" /><path d="M5.500 11.500h5V14h-5z" fill="#fbe89c" /></svg>
            </button>
            <button aria-label="Chrome" class="mx-[6px] w-[28px]">
                <svg class="mx-auto size-[14px]" viewBox="0 0 14 14"><circle cx="7" cy="7" r="7" fill="#fbc116" /><path d="M7 7L.9 3.500A7 7 0 0 1 13.100 3.500H7z" fill="#e33b2e" /><path d="M7 7L.9 3.500A7 7 0 0 0 7 14l3-5.200z" fill="#2ba24c" /><circle cx="7" cy="7" r="3.300" fill="#fff" /><circle cx="7" cy="7" r="2.600" fill="#4285f4" /></svg>
            </button>
            <button aria-label="QQ" class="h-full w-7 rounded-xs border border-[#86c0de] bg-white/20"><svg class="mx-auto h-[15px] w-[14px]"><use href="#qq" /></svg></button>
            <button aria-label="Pro/ENGINEER" class="ml-[2px] h-full w-[26px] rounded-xs border border-[#c4e4f2] bg-white/50">
                <svg class="mx-auto size-[14px]" viewBox="0 0 14 14"><path d="M1 3l2-2h10v10l-2 2H1z" fill="#f2e463" stroke="#4c5a30" stroke-width=".8" /><path d="M4 3h8v7H4z" fill="#50cfc8" stroke="#256569" stroke-width=".7" /></svg>
            </button>
            <button aria-label="Word" class="ml-[4px] h-full w-7 rounded-xs border border-[#86c0de] bg-white/20">
                <svg class="mx-auto size-[14px]" viewBox="0 0 14 14"><path d="M4 1h9v12H4z" fill="#fff" stroke="#5c7cb0" stroke-width=".7" /><path d="M10 4h2M10 6h2M6 10h6M6 12h6" stroke="#5c7cb0" stroke-width=".8" /><path d="M1 2h8v7H1z" fill="#2a5cac" /><path d="M2.500 3.500l1 4 1.500-3.500 1.500 3.500 1-4" fill="none" stroke="#fff" /></svg>
            </button>
        </div>
        <div class="flex h-full items-center gap-[4px]">
            <span class="h-3.5 w-[3px] border-x border-dotted border-[#0e3560]"></span>
            <svg class="h-[7px] w-2" viewBox="0 0 8 7"><path d="M0 2h8v5H0z" fill="#cfd6dc" /><path d="M1 4h6M1 5.500h6" stroke="#5b6a78" stroke-width=".6" /><path d="M4 2V0h2" stroke="#cfd6dc" fill="none" stroke-width=".6" /></svg>
            <svg class="mx-[2px] h-[2px] w-[4px]" viewBox="0 0 4 2"><path d="M0 2h4L2 0z" fill="#fff" /></svg>
            <svg class="size-2"><use href="#qq" /></svg>
            <svg class="size-2" viewBox="0 0 8 8"><path d="M2 1.500h5.500v4H2zM3 7.500h4M.5 0v4.500H2" fill="none" stroke="#fff" stroke-width=".9" /></svg>
            <svg class="size-2" viewBox="0 0 8 8"><path d="M0 3h1.500L4 1v6L1.500 5H0z" fill="#fff" /><path d="M5 2.500q1 1.500 0 3M6.500 1.500q1.500 2.500 0 5" fill="none" stroke="#fff" stroke-width=".7" /></svg>
            <time class="ml-[3px] text-center">20:35<br>2017/6/12</time>
            <button aria-label="显示桌面" class="h-full w-[6px] border-l border-[#0e3560] bg-white/20"></button>
        </div>
    </footer>
</body>

</html>
